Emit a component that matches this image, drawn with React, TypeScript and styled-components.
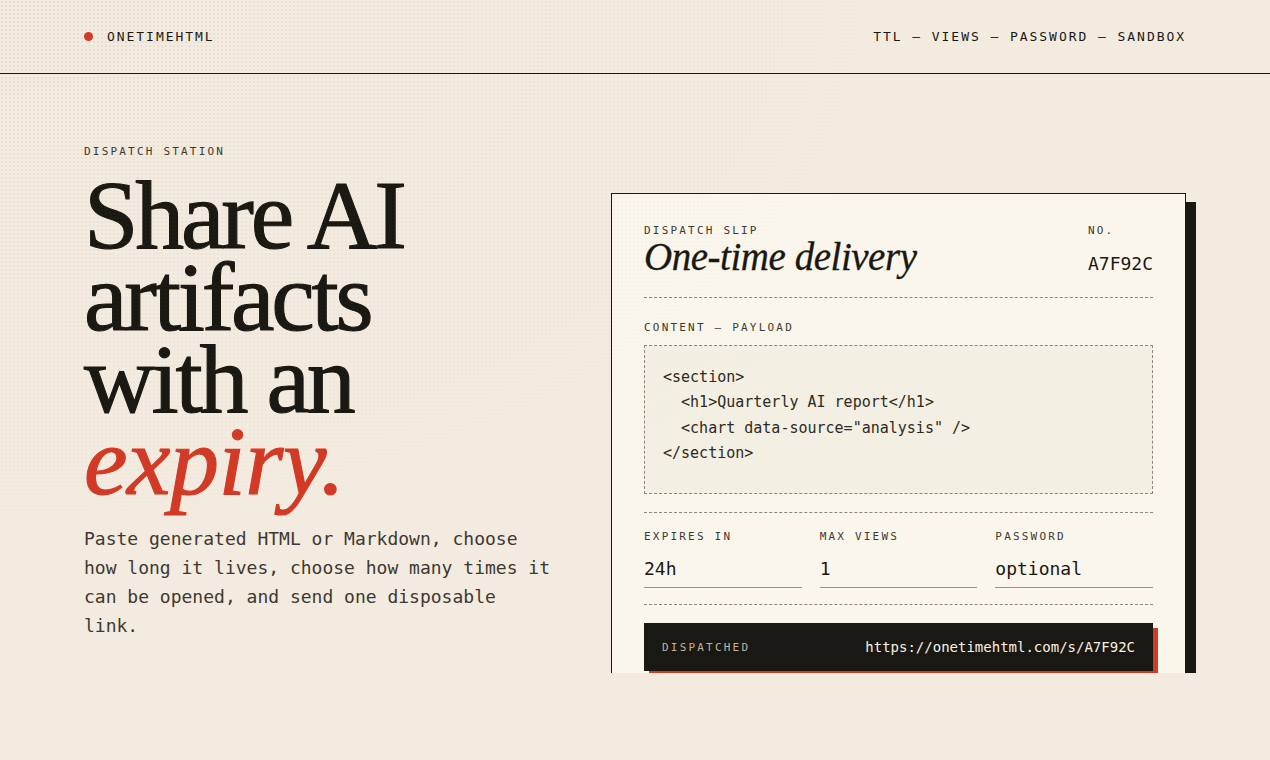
import React from 'react'
import styled, { createGlobalStyle } from 'styled-components'

const GlobalStyle = createGlobalStyle`
    html, body {
        margin: 0;
        padding: 0;
        background: #f3ebdf;
    }
    body {
        position: relative;
        font-family: "DejaVu Sans Mono", "Liberation Mono", monospace;
        color: #1a1813;
        overflow: hidden;
    }
    body::before {
        content: "";
        position: fixed;
        inset: 0;
        background-image: radial-gradient(rgba(120, 100, 70, 0.1) 0.7px, transparent 0.8px);
        background-size: 4px 4px;
        -webkit-mask-image: radial-gradient(ellipse at 0% 0%, #000 0%, rgba(0, 0, 0, 0.5) 30%, transparent 55%);
        mask-image: radial-gradient(ellipse at 0% 0%, #000 0%, rgba(0, 0, 0, 0.5) 30%, transparent 55%);
        pointer-events: none;
    }
`

const mono = `"DejaVu Sans Mono", "Liberation Mono", monospace`
const serif = `"Liberation Serif", "DejaVu Serif", serif`

export default function App() {
    return (
        <>
            <GlobalStyle />
            <Page>
                <Header>
                    <Brand>
                        <Dot />
                        ONETIMEHTML
                    </Brand>
                    <Nav>TTL – VIEWS – PASSWORD – SANDBOX</Nav>
                </Header>
                <Main>
                    <Intro>
                        <Eyebrow>DISPATCH STATION</Eyebrow>
                        <Headline>
                            Share AI<br />
                            artifacts<br />
                            with an<br />
                            <Accent>expiry.</Accent>
                        </Headline>
                        <Lead>
                            Paste generated HTML or Markdown, choose how long it lives, choose how many
                            times it can be opened, and send one disposable link.
                        </Lead>
                    </Intro>
                    <Slip>
                        <SlipHead>
                            <div>
                                <Label>DISPATCH SLIP</Label>
                                <SlipTitle>One-time delivery</SlipTitle>
                            </div>
                            <SlipNo>
                                <Label>NO.</Label>
                                <Code>A7F92C</Code>
                            </SlipNo>
                        </SlipHead>
                        <Rule />
                        <Section>
                            <Label>CONTENT – PAYLOAD</Label>
                            <Payload>
{`<section>
  <h1>Quarterly AI report</h1>
  <chart data-source="analysis" />
</section>`}
                            </Payload>
                        </Section>
                        <Rule />
                        <Fields>
                            <Field>
                                <Label>EXPIRES IN</Label>
                                <Value>24h</Value>
                            </Field>
                            <Field>
                                <Label>MAX VIEWS</Label>
                                <Value>1</Value>
                            </Field>
                            <Field>
                                <Label>PASSWORD</Label>
                                <Value>optional</Value>
                            </Field>
                        </Fields>
                        <Rule />
                        <Dispatched>
                            <DispatchedLabel>DISPATCHED</DispatchedLabel>
                            <Url>https://onetimehtml.com/s/A7F92C</Url>
                        </Dispatched>
                    </Slip>
                </Main>
            </Page>
        </>
    )
}

const Page = styled.div`
    width: 1270px;
    height: 760px;
`

const Header = styled.header`
    height: 73px;
    padding: 0 84px;
    display: flex;
    align-items: center;
    justify-content: space-between;
    border-bottom: 1px solid #1a1813;
`

const Brand = styled.div`
    display: flex;
    align-items: center;
    gap: 14px;
    font-family: ${mono};
    font-size: 13px;
    letter-spacing: 0.15em;
    color: #1a1813;
`

const Dot = styled.span`
    width: 9px;
    height: 9px;
    border-radius: 50%;
    background: #d33a26;
`

const Nav = styled.nav`
    font-family: ${mono};
    font-size: 13px;
    letter-spacing: 0.15em;
    color: #1a1813;
`

const Main = styled.main`
    height: 599px;
    overflow: hidden;
    padding: 0 84px;
    display: grid;
    grid-template-columns: 1fr 575px;
    align-items: start;
`

const Intro = styled.div`
    padding-top: 71px;
`

const Eyebrow = styled.p`
    margin: 0;
    font-family: ${mono};
    font-size: 11px;
    letter-spacing: 0.2em;
    color: #3d3931;
`

const Headline = styled.h1`
    margin: 16px 0 0;
    font-family: ${serif};
    font-weight: 400;
    font-size: 98px;
    line-height: 82px;
    letter-spacing: -0.033em;
    -webkit-text-stroke: 1.1px currentColor;
    color: #1a1813;
`

const Accent = styled.em`
    color: #d33a26;
    font-style: italic;
    letter-spacing: -0.005em;
`

const Lead = styled.p`
    margin: 22px 0 0;
    max-width: 470px;
    font-family: ${mono};
    font-size: 18px;
    line-height: 29px;
    color: #3d3931;
`

const Slip = styled.section`
    margin-top: 119px;
    padding: 30px 32px 40px;
    background: #faf6eb;
    border: 1px solid #1a1813;
    box-shadow: 10px 9px 0 #1a1813;
`

const SlipHead = styled.div`
    display: flex;
    justify-content: space-between;
    align-items: flex-start;
    padding-bottom: 20px;
`

const Label = styled.div`
    font-family: ${mono};
    font-size: 11px;
    letter-spacing: 0.2em;
    color: #3d3931;
`

const SlipTitle = styled.h2`
    margin: 0;
    font-family: ${serif};
    font-style: italic;
    font-weight: 400;
    font-size: 39px;
    line-height: 40px;
    letter-spacing: -0.012em;
    -webkit-text-stroke: 0.3px currentColor;
    color: #1a1813;
`

const SlipNo = styled.div`
    display: flex;
    flex-direction: column;
    gap: 16px;
`

const Code = styled.div`
    font-family: ${mono};
    font-size: 18px;
    color: #1a1813;
`

const Rule = styled.hr`
    margin: 0;
    border: 0;
    border-top: 1px dashed #8e877a;
`

const Section = styled.div`
    padding: 23px 0 18px;
    display: flex;
    flex-direction: column;
    gap: 11px;
`

const Payload = styled.pre`
    margin: 0;
    height: 149px;
    box-sizing: border-box;
    padding: 19px 18px 18px;
    background: #f3efe2;
    border: 1px dashed #8e877a;
    font-family: ${mono};
    font-size: 15px;
    line-height: 25.4px;
    color: #2e2a23;
`

const Fields = styled.div`
    display: grid;
    grid-template-columns: repeat(3, 1fr);
    gap: 18px;
    padding: 17px 0 16px;
`

const Field = styled.div`
    display: flex;
    flex-direction: column;
    gap: 15px;
`

const Value = styled.div`
    font-family: ${mono};
    font-size: 18px;
    padding-bottom: 8px;
    border-bottom: 1px solid #9a948a;
    color: #1a1813;
`

const Dispatched = styled.div`
    margin-top: 18px;
    height: 48px;
    padding: 0 18px;
    display: flex;
    align-items: center;
    justify-content: space-between;
    background: #1a1813;
    box-shadow: 5px 5px 0 #d33a26;
`

const DispatchedLabel = styled.span`
    font-family: ${mono};
    font-size: 11px;
    letter-spacing: 0.2em;
    color: #bdb4a2;
`

const Url = styled.span`
    font-family: ${mono};
    font-size: 14px;
    color: #f6f1e4;
`
